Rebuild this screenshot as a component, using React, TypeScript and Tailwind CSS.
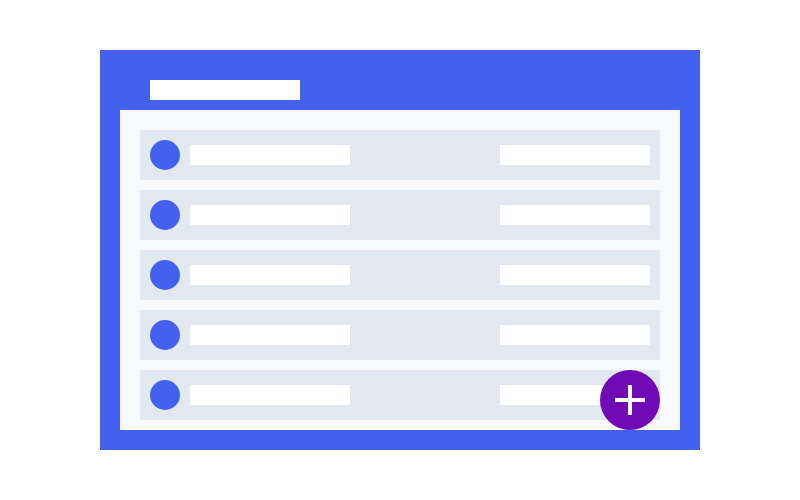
const rows = [0, 1, 2, 3, 4];

function ListRow() {
  return (
    <div className="flex h-[50px] items-center justify-between bg-[#e2e8f0] px-[10px]">
      <div className="flex items-center gap-[10px]">
        <div className="h-[30px] w-[30px] rounded-full bg-[#4361ee]" />
        <div className="h-[20px] w-[160px] bg-white" />
      </div>
      <div className="h-[20px] w-[150px] bg-white" />
    </div>
  );
}

export default function App() {
  return (
    <div className="flex h-[500px] w-[800px] items-center justify-center bg-white">
      <div className="flex h-[400px] w-[600px] flex-col bg-[#4361ee] px-[20px] pb-[20px]">
        {/* Header */}
        <div className="h-[60px] shrink-0 pl-[30px] pt-[30px]">
          <div className="h-[20px] w-[150px] bg-white" />
        </div>

        {/* List panel */}
        <div className="relative flex flex-1 flex-col gap-[10px] bg-[#f8f9fa] px-[20px] pt-[20px]">
          {rows.map((r) => (
            <ListRow key={r} />
          ))}

          {/* Floating add button */}
          <div className="absolute bottom-0 right-[20px] flex h-[60px] w-[60px] items-center justify-center rounded-full bg-[#7209b7]">
            <svg width="32" height="32" viewBox="0 0 32 32">
              <path d="M16 1v30M1 16h30" stroke="white" strokeWidth="4" />
            </svg>
          </div>
        </div>
      </div>
    </div>
  );
}
